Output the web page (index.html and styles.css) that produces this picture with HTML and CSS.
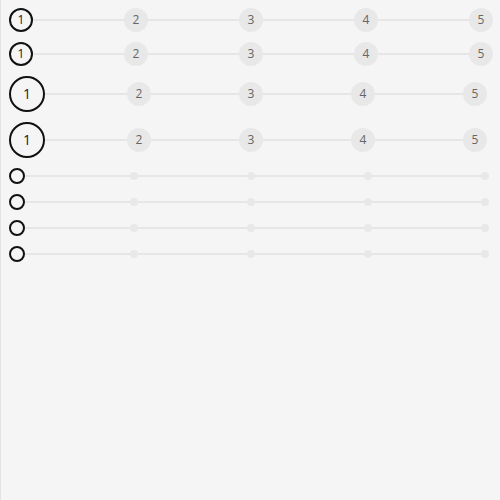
FILE: index.html
```html
<!DOCTYPE html>
<html>
<head>
<meta charset="utf-8">
<link rel="stylesheet" href="styles.css">
</head>
<body>
<div class="page">
  <div class="steps sm">
    <span class="step active">1</span><span class="line"></span>
    <span class="step">2</span><span class="line"></span>
    <span class="step">3</span><span class="line"></span>
    <span class="step">4</span><span class="line"></span>
    <span class="step">5</span>
  </div>
  <div class="steps sm">
    <span class="step active">1</span><span class="line"></span>
    <span class="step">2</span><span class="line"></span>
    <span class="step">3</span><span class="line"></span>
    <span class="step">4</span><span class="line"></span>
    <span class="step">5</span>
  </div>
  <div class="steps lg">
    <span class="step active">1</span><span class="line first"></span>
    <span class="step">2</span><span class="line"></span>
    <span class="step">3</span><span class="line"></span>
    <span class="step">4</span><span class="line"></span>
    <span class="step">5</span>
  </div>
  <div class="steps lg">
    <span class="step active">1</span><span class="line first"></span>
    <span class="step">2</span><span class="line"></span>
    <span class="step">3</span><span class="line"></span>
    <span class="step">4</span><span class="line"></span>
    <span class="step">5</span>
  </div>
  <div class="steps dots">
    <span class="step active"></span><span class="line first"></span>
    <span class="step"></span><span class="line"></span>
    <span class="step"></span><span class="line"></span>
    <span class="step"></span><span class="line"></span>
    <span class="step"></span>
  </div>
  <div class="steps dots">
    <span class="step active"></span><span class="line first"></span>
    <span class="step"></span><span class="line"></span>
    <span class="step"></span><span class="line"></span>
    <span class="step"></span><span class="line"></span>
    <span class="step"></span>
  </div>
  <div class="steps dots">
    <span class="step active"></span><span class="line first"></span>
    <span class="step"></span><span class="line"></span>
    <span class="step"></span><span class="line"></span>
    <span class="step"></span><span class="line"></span>
    <span class="step"></span>
  </div>
  <div class="steps dots">
    <span class="step active"></span><span class="line first"></span>
    <span class="step"></span><span class="line"></span>
    <span class="step"></span><span class="line"></span>
    <span class="step"></span><span class="line"></span>
    <span class="step"></span>
  </div>
</div>
</body>
</html>
```
FILE: styles.css
```css
html, body {
  margin: 0;
  padding: 0;
  background: #f5f5f5;
}
.page {
  box-sizing: border-box;
  min-height: 100vh;
  border-left: 1px solid #e3e3e3;
  padding: 8px 7px 0 8px;
  display: flex;
  flex-direction: column;
  gap: 10px;
  font-family: "Open Sans", "Noto Sans", sans-serif;
}
.steps {
  display: flex;
  align-items: center;
}
.step {
  position: relative;
  z-index: 1;
  box-sizing: border-box;
  flex: none;
  display: flex;
  align-items: center;
  justify-content: center;
  border-radius: 50%;
  background: #e8e8e8;
  color: #666;
  font-size: 12px;
  line-height: 1;
}
.step.active {
  background: transparent;
  border: 2px solid #111;
  color: #222;
}
.line {
  flex: 1 1 0;
  height: 2px;
  background: #e6e6e6;
}
.sm .step {
  width: 24px;
  height: 24px;
}
.lg .step {
  width: 24px;
  height: 24px;
  margin: 0 6px;
}
.lg .step.active {
  width: 36px;
  height: 36px;
  margin: 0;
  font-size: 14px;
}
.lg .line {
  flex: 1 1 6px;
  margin: 0 -6px;
}
.lg .line.first {
  flex-basis: 0;
  margin-left: 0;
}
.dots .step {
  width: 8px;
  height: 8px;
  margin: 0 4px;
}
.dots .step.active {
  width: 16px;
  height: 16px;
  margin: 0;
}
.dots .line {
  flex: 1 1 4px;
  margin: 0 -4px;
}
.dots .line.first {
  flex-basis: 0;
  margin-left: 0;
}
```
